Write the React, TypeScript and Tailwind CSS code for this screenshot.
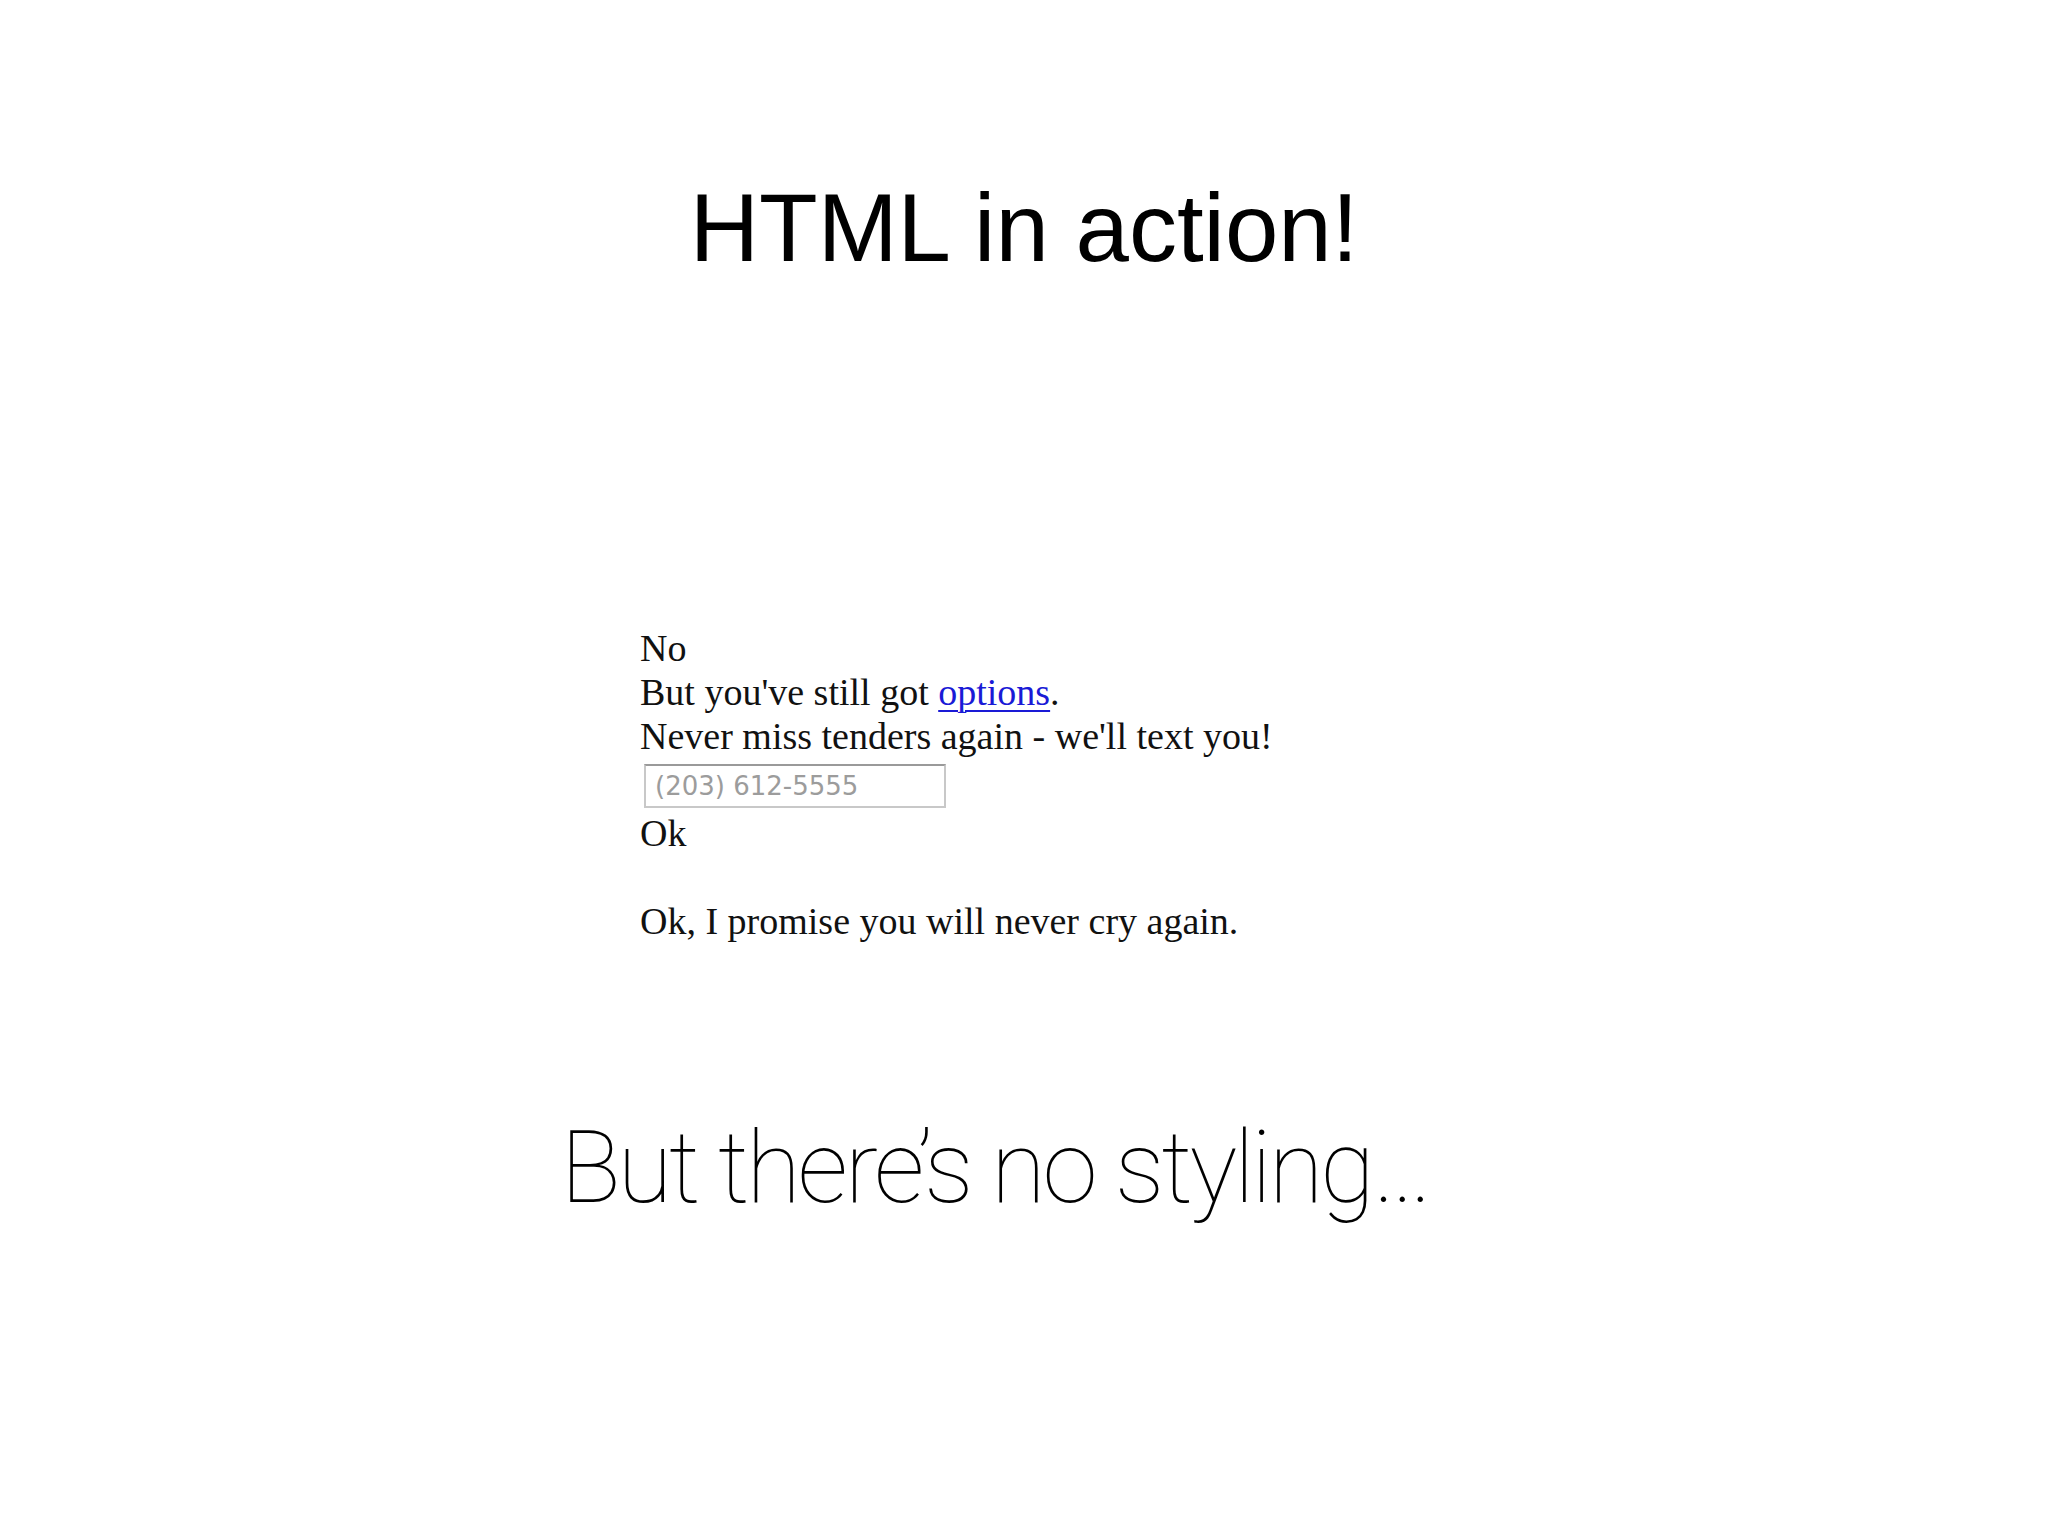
export default function App() {
  return (
    <div className="w-full h-[1536px] bg-white text-black overflow-hidden">
      {/* Slide title */}
      <h1 className="pt-[180px] text-center text-[96px] leading-none font-normal font-['Liberation_Sans',Arial,sans-serif]">
        HTML in action!
      </h1>

      {/* Unstyled page rendered in a browser */}
      <div className="mt-[350px] ml-[640px] text-[38px] leading-[44px] text-[#111] font-['Liberation_Serif','Times_New_Roman',serif]">
        <div>No</div>
        <div>
          But you've still got{" "}
          <a href="#" className="text-[#1a1ad6] underline underline-offset-[5px] decoration-[2px]">
            options
          </a>
          .
        </div>
        <div>Never miss tenders again - we'll text you!</div>
        <input
          type="text"
          placeholder="(203) 612-5555"
          className="block mt-[6px] ml-[4px] w-[302px] h-[44px] px-[9px] border-2 border-[#c8c8c8] border-t-[#9a9a9a] bg-white text-[26px] placeholder:text-[#9c9c9c] font-['DejaVu_Sans',sans-serif] outline-none"
        />
        <div className="mt-[3px]">Ok</div>
        <div className="h-[44px]" />
        <div>Ok, I promise you will never cry again.</div>
      </div>

      {/* Closing line */}
      <div className="mt-[175px] flex justify-center pr-[58px]">
        <p className="text-[100px] leading-none font-thin tracking-[-3.3px] font-['Roboto','Liberation_Sans',sans-serif]">
          But there’s no styling…
        </p>
      </div>
    </div>
  );
}
